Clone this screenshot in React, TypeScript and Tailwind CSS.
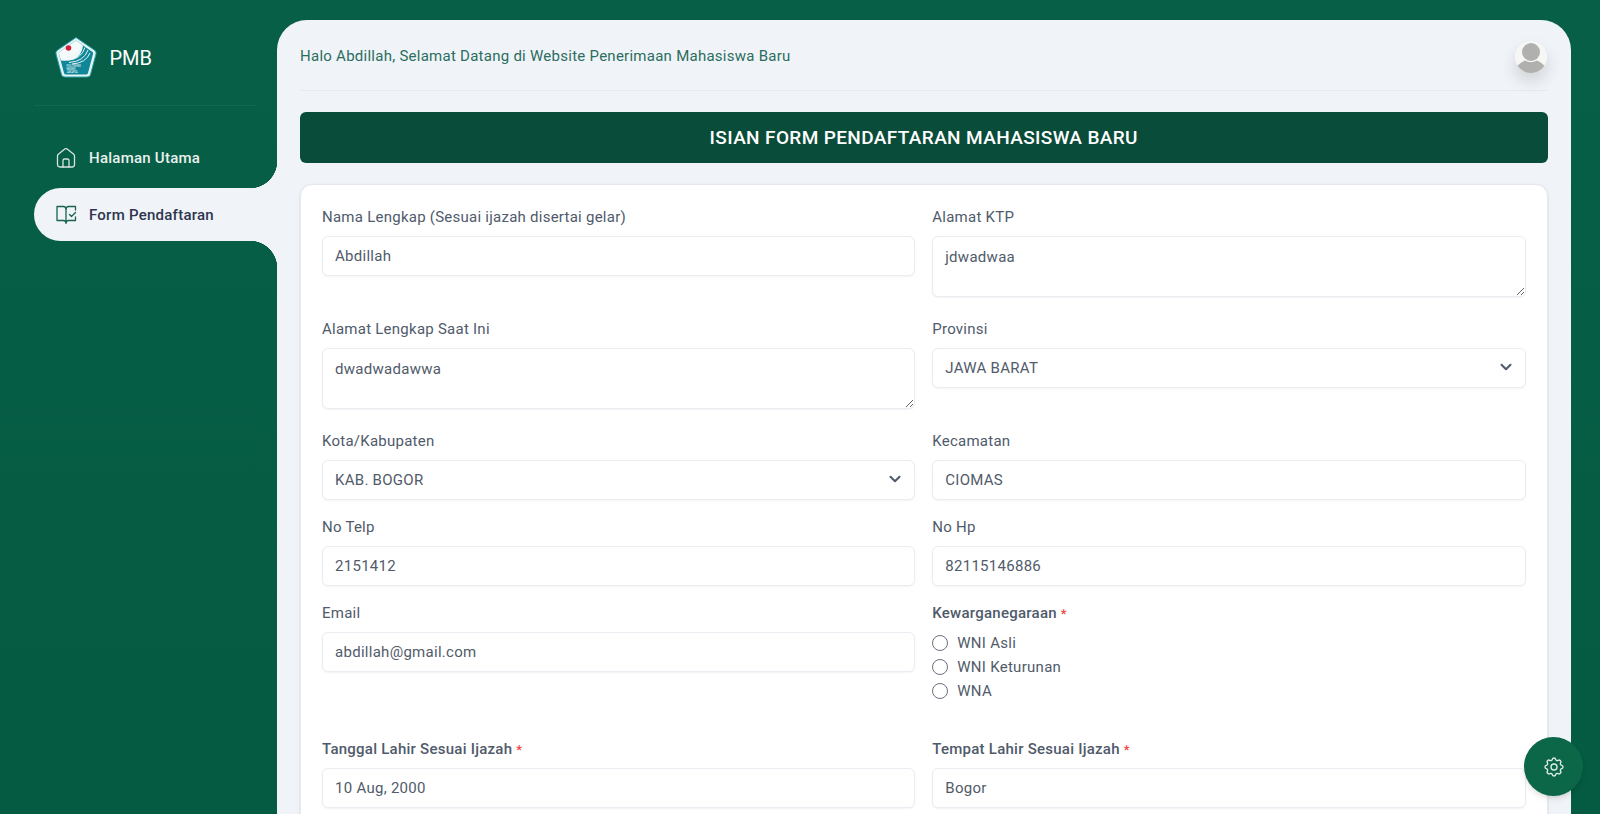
import { ChevronDown } from 'lucide-react'
import { TbSettings } from 'react-icons/tb'

const inputClass =
  'block w-full h-[40px] px-3 rounded-md bg-white border border-[#e9edf2] shadow-[0_1px_2px_rgba(0,0,0,0.05)] text-[15px] tracking-[0.28px] text-[#515b6a] outline-none'

function Label({ children, required, tight }: { children: string; required?: boolean; tight?: boolean }) {
  return (
    <label
      className={`block h-[20px] leading-[20px] text-[15px] tracking-[0.25px] text-[#4f5a6b] ${tight ? 'mb-2' : 'mb-[9px]'} ${required ? 'font-medium' : ''}`}
    >
      {children}
      {required && <span className="ml-1 text-[#ef4444] text-[13px]">*</span>}
    </label>
  )
}

function TextField({ label, value, required }: { label: string; value: string; required?: boolean }) {
  return (
    <div>
      <Label required={required}>{label}</Label>
      <input className={inputClass} defaultValue={value} readOnly />
    </div>
  )
}

function AreaField({ label, value }: { label: string; value: string }) {
  return (
    <div>
      <Label>{label}</Label>
      <textarea
        className="block w-full h-[61px] mb-[5px] px-3 py-[9px] rounded-md bg-white border border-[#e9edf2] shadow-[0_1px_2px_rgba(0,0,0,0.05)] text-[15px] tracking-[0.28px] text-[#515b6a] outline-none"
        defaultValue={value}
        readOnly
      />
    </div>
  )
}

function SelectField({ label, value }: { label: string; value: string }) {
  return (
    <div>
      <Label>{label}</Label>
      <div className="relative">
        <select className={`${inputClass} appearance-none`} defaultValue={value}>
          <option>{value}</option>
        </select>
        <ChevronDown size={18} strokeWidth={2.8} className="absolute right-[11px] top-[10px] text-[#515b6a]" />
      </div>
    </div>
  )
}

function Radio({ label }: { label: string }) {
  return (
    <label className="flex items-center gap-[9px] h-[24px] text-[15px] tracking-[0.28px] text-[#515b6a]">
      <span className="w-4 h-4 rounded-full border border-[#6b7280] bg-white" />
      {label}
    </label>
  )
}

function Logo() {
  return (
    <svg width="42" height="42" viewBox="0 0 42 42">
      <path d="M21 .5 L40 13.500 Q41.500 15 41 17 L35.500 37.500 Q35 40 32 40 L10 40 Q7 40 6.500 37.500 L1 17 Q.5 15 2 13.500 Z" fill="#e4f3f3" stroke="#2aa0ab" strokeWidth="1" strokeLinejoin="round" />
      <path d="M21 3.500 L37.500 15 Q38.500 16 38 17 L33 36 Q32.500 37.500 31 37.500 L11 37.500 Q9.500 37.500 9 36 L4 17 Q3.500 16 4.500 15 Z" fill="#0f8799" />
      <path d="M21 3.500 L28 8.500 Q27 19 18 22.500 Q12 24.500 6 23.500 L4 17 Q3.500 16 4.500 15 Z" fill="#f4fbfb" />
      <circle cx="13.500" cy="11" r="2.800" fill="#d5203a" />
      <path d="M12 20.500 Q23 20 27 9 M13 23 Q26 22.500 30 10.500 M14 25.500 Q29 24.500 33 13 M17 27 Q31 26 35 16" fill="none" stroke="#e8f5f6" strokeWidth="1" />
      <text x="11.500" y="29.500" fontSize="2.600" fill="#fff" fontFamily="Roboto, sans-serif">POLITEKNIK</text>
      <text x="11.500" y="32.500" fontSize="2.600" fill="#fff" fontFamily="Roboto, sans-serif">NEGERI</text>
      <text x="11.500" y="35.500" fontSize="2.600" fill="#fff" fontFamily="Roboto, sans-serif">JAKARTA</text>
    </svg>
  )
}

function HomeIcon() {
  return (
    <svg width="20" height="20" viewBox="0 0 20 20" fill="none" stroke="#d5e5df" strokeWidth="1.3" strokeLinejoin="round" strokeLinecap="round">
      <path d="M1.500 8 Q1.500 7 2.300 6.300 L8.800 1 Q10 0.200 11.200 1 L17.700 6.300 Q18.500 7 18.500 8 L18.500 16.500 Q18.500 19 16 19 L4 19 Q1.500 19 1.500 16.500 Z" />
      <path d="M7 19 L7 12.500 Q7 11 8.500 11 L11.500 11 Q13 11 13 12.500 L13 19" />
    </svg>
  )
}

function BookCheckIcon() {
  return (
    <svg width="21" height="20" viewBox="0 0 21 20" fill="none" stroke="#17644e" strokeWidth="1.300" strokeLinejoin="round" strokeLinecap="round">
      <path d="M10 4 Q10 1.500 7.500 1.500 L1 1.500 L1 15.500 L7.500 15.500 Q10 15.500 10 18 Z" />
      <path d="M10 4 Q10 1.500 12.500 1.500 L19.500 1.500 L19.500 5" />
      <path d="M19.500 12 L19.500 15.500 L12.500 15.500 Q10 15.500 10 18" />
      <path d="M13.500 9.500 L15.500 11.500 L19.500 7.500" />
    </svg>
  )
}

function Sidebar() {
  return (
    <aside className="w-[277px] shrink-0 pt-[37px]">
      <div className="flex items-center gap-[12.5px] pl-[55px] h-[42px] text-[20px] text-white">
        <Logo />
        <span>PMB</span>
      </div>
      <div className="mt-[26px] ml-[34px] mr-[21px] h-px bg-white/5" />
      <nav className="mt-[30px] ml-[34px]">
        <a href="#" className="flex items-center gap-[13px] pl-[22px] h-[52px] pb-2 text-[15px] font-medium tracking-[0.25px] text-[#e9f1ee]">
          <HomeIcon />
          Halaman Utama
        </a>
        <a href="#" className="relative flex items-center gap-3 pl-[22px] pt-px h-[53px] rounded-l-[27px] bg-[#f0f4f8] text-[15px] font-medium tracking-[0.25px] text-[#2f3450]">
          <BookCheckIcon />
          Form Pendaftaran
          <span className="absolute right-0 -top-[27px] w-[27px] h-[27px] bg-[radial-gradient(circle_at_top_left,transparent_27px,#f0f4f8_27.5px)]" />
          <span className="absolute right-0 -bottom-[27px] w-[27px] h-[27px] bg-[radial-gradient(circle_at_bottom_left,transparent_27px,#f0f4f8_27.5px)]" />
        </a>
      </nav>
    </aside>
  )
}

function Avatar() {
  return (
    <div className="w-[32px] h-[32px] rounded-full overflow-hidden bg-[#f6f6f5] shadow-[0_8px_16px_rgba(0,0,0,0.14)]">
      <svg width="32" height="32" viewBox="0 0 32 32">
        <circle cx="16" cy="11" r="9" fill="#b0b0ae" />
        <path d="M1 32 L1 27 Q4 22 10 19.500 Q16 23 22 19.500 Q28 22 31 27 L31 32 Z" fill="#b0b0ae" />
      </svg>
    </div>
  )
}

function App() {
  return (
    <div className="relative flex h-screen overflow-hidden bg-gradient-to-b from-[#085f48] to-[#045b41] font-['Roboto',sans-serif]">
      <Sidebar />

      <main className="flex-1 mt-5 mr-[29.5px] px-[23px] rounded-t-[30px] bg-[#f0f4f8]">
        <header className="flex items-center justify-between h-[71px] pt-[3px] pr-px border-b border-[#e6eaee]">
          <span className="text-[15px] tracking-[0.26px] text-[#2b6d5e]">
            Halo Abdillah, Selamat Datang di Website Penerimaan Mahasiswa Baru
          </span>
          <Avatar />
        </header>

        <h1 className="flex items-center justify-center h-[51px] mt-[21px] pt-[2px] rounded-md bg-[#0a4c3a] text-[19px] font-medium tracking-[0.37px] text-white">
          ISIAN FORM PENDAFTARAN MAHASISWA BARU
        </h1>

        <section className="mt-[21px] px-[21px] pt-[22px] pb-8 rounded-xl bg-white border border-[#e5e9ef] shadow-sm">
          <div className="grid grid-cols-2 gap-x-[17px] gap-y-[17px]">
            <TextField label="Nama Lengkap (Sesuai ijazah disertai gelar)" value="Abdillah" />
            <AreaField label="Alamat KTP" value="jdwadwaa" />
            <AreaField label="Alamat Lengkap Saat Ini" value="dwadwadawwa" />
            <SelectField label="Provinsi" value="JAWA BARAT" />
            <SelectField label="Kota/Kabupaten" value="KAB. BOGOR" />
            <TextField label="Kecamatan" value="CIOMAS" />
            <TextField label="No Telp" value="2151412" />
            <TextField label="No Hp" value="82115146886" />
            <TextField label="Email" value="abdillah@gmail.com" />
            <div className="pb-[19px]">
              <Label required tight>Kewarganegaraan</Label>
              <Radio label="WNI Asli" />
              <Radio label="WNI Keturunan" />
              <Radio label="WNA" />
            </div>
            <TextField label="Tanggal Lahir Sesuai Ijazah" value="10 Aug, 2000" required />
            <TextField label="Tempat Lahir Sesuai Ijazah" value="Bogor" required />
          </div>
        </section>
      </main>

      <button className="absolute right-[17px] bottom-[18px] flex items-center justify-center w-[59px] h-[59px] rounded-full bg-[#0b6748] text-[#dcebe5] shadow-md">
        <TbSettings size={24} strokeWidth={1.4} />
      </button>
    </div>
  )
}

export default App
